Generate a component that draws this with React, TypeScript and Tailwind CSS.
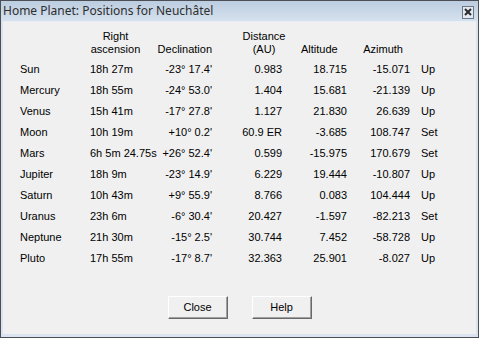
import React from "react";

const rows: [string, string, string, string, string, string, string][] = [
  ["Sun", "18h 27m", "-23° 17.4'", "0.983", "18.715", "-15.071", "Up"],
  ["Mercury", "18h 55m", "-24° 53.0'", "1.404", "15.681", "-21.139", "Up"],
  ["Venus", "15h 41m", "-17° 27.8'", "1.127", "21.830", "26.639", "Up"],
  ["Moon", "10h 19m", "+10° 0.2'", "60.9 ER", "-3.685", "108.747", "Set"],
  ["Mars", "6h 5m 24.75s", "+26° 52.4'", "0.599", "-15.975", "170.679", "Set"],
  ["Jupiter", "18h 9m", "-23° 14.9'", "6.229", "19.444", "-10.807", "Up"],
  ["Saturn", "10h 43m", "+9° 55.9'", "8.766", "0.083", "104.444", "Up"],
  ["Uranus", "23h 6m", "-6° 30.4'", "20.427", "-1.597", "-82.213", "Set"],
  ["Neptune", "21h 30m", "-15° 2.5'", "30.744", "7.452", "-58.728", "Up"],
  ["Pluto", "17h 55m", "-17° 8.7'", "32.363", "25.901", "-8.027", "Up"],
];

export default function App() {
  return (
    <div className="w-[479px] h-[338px] border border-[#4b4f55] bg-[#d9e4f0] flex flex-col">
      <div className="h-[20px] flex items-center justify-between pl-[2px] pr-[4px] bg-gradient-to-b from-[#bccde0] to-[#d5e1ee]">
        <span
          className="text-[12px] text-[#2e2e2e] leading-none"
          style={{ fontFamily: '"Noto Sans", "Open Sans", sans-serif' }}
        >
          Home Planet: Positions for Neuchâtel
        </span>
        <div className="w-[12px] h-[13px] border border-[#6d7886] bg-[#e3e9f0] flex items-center justify-center mt-[2px]">
          <svg width="8" height="8" viewBox="0 0 8 8">
            <path d="M1 1 L7 7 M7 1 L1 7" stroke="#2a2a2a" strokeWidth="2" />
          </svg>
        </div>
      </div>
      <div className="h-[1px] bg-[#e8eff7] mx-[2px]" />
      <div
        className="flex-1 mx-[2px] mb-[3px] bg-[#f0f0f0] text-[11px] text-black flex flex-col"
        style={{ fontFamily: '"Liberation Sans", Arial, sans-serif' }}
      >
        <div className="flex pt-[8px] leading-[13px] items-end">
          <div className="w-[87px]" />
          <div className="w-[51px] text-center">
            Right
            <br />
            ascension
          </div>
          <div className="w-[71px] text-right">Declination</div>
          <div className="w-[74px] ml-[15px] text-center">
            Distance
            <br />
            (AU)
          </div>
          <div className="w-[36px] text-right whitespace-nowrap">Altitude</div>
          <div className="w-[66px] text-right">Azimuth</div>
        </div>
        <div className="flex flex-col mt-[3px]">
          {rows.map((r) => (
            <div key={r[0]} className="flex h-[21px] items-center">
              <div className="w-[17px]" />
              <div className="w-[70px]">{r[0]}</div>
              <div className="w-[65px] whitespace-nowrap">{r[1]}</div>
              <div className="w-[57px] text-right">{r[2]}</div>
              <div className="w-[70px] text-right">{r[3]}</div>
              <div className="w-[65px] text-right">{r[4]}</div>
              <div className="w-[63px] text-right">{r[5]}</div>
              <div className="pl-[11px]">{r[6]}</div>
            </div>
          ))}
        </div>
        <div className="flex-1" />
        <div className="flex justify-center gap-[24px] pb-[15px]">
          <button className="w-[60px] h-[23px] bg-[#f0f0f0] border border-t-white border-l-white border-r-[#696969] border-b-[#696969] shadow-[inset_-1px_-1px_0_#a0a0a0] text-[11px]">
            Close
          </button>
          <button className="w-[60px] h-[23px] bg-[#f0f0f0] border border-t-white border-l-white border-r-[#696969] border-b-[#696969] shadow-[inset_-1px_-1px_0_#a0a0a0] text-[11px]">
            Help
          </button>
        </div>
      </div>
    </div>
  );
}
